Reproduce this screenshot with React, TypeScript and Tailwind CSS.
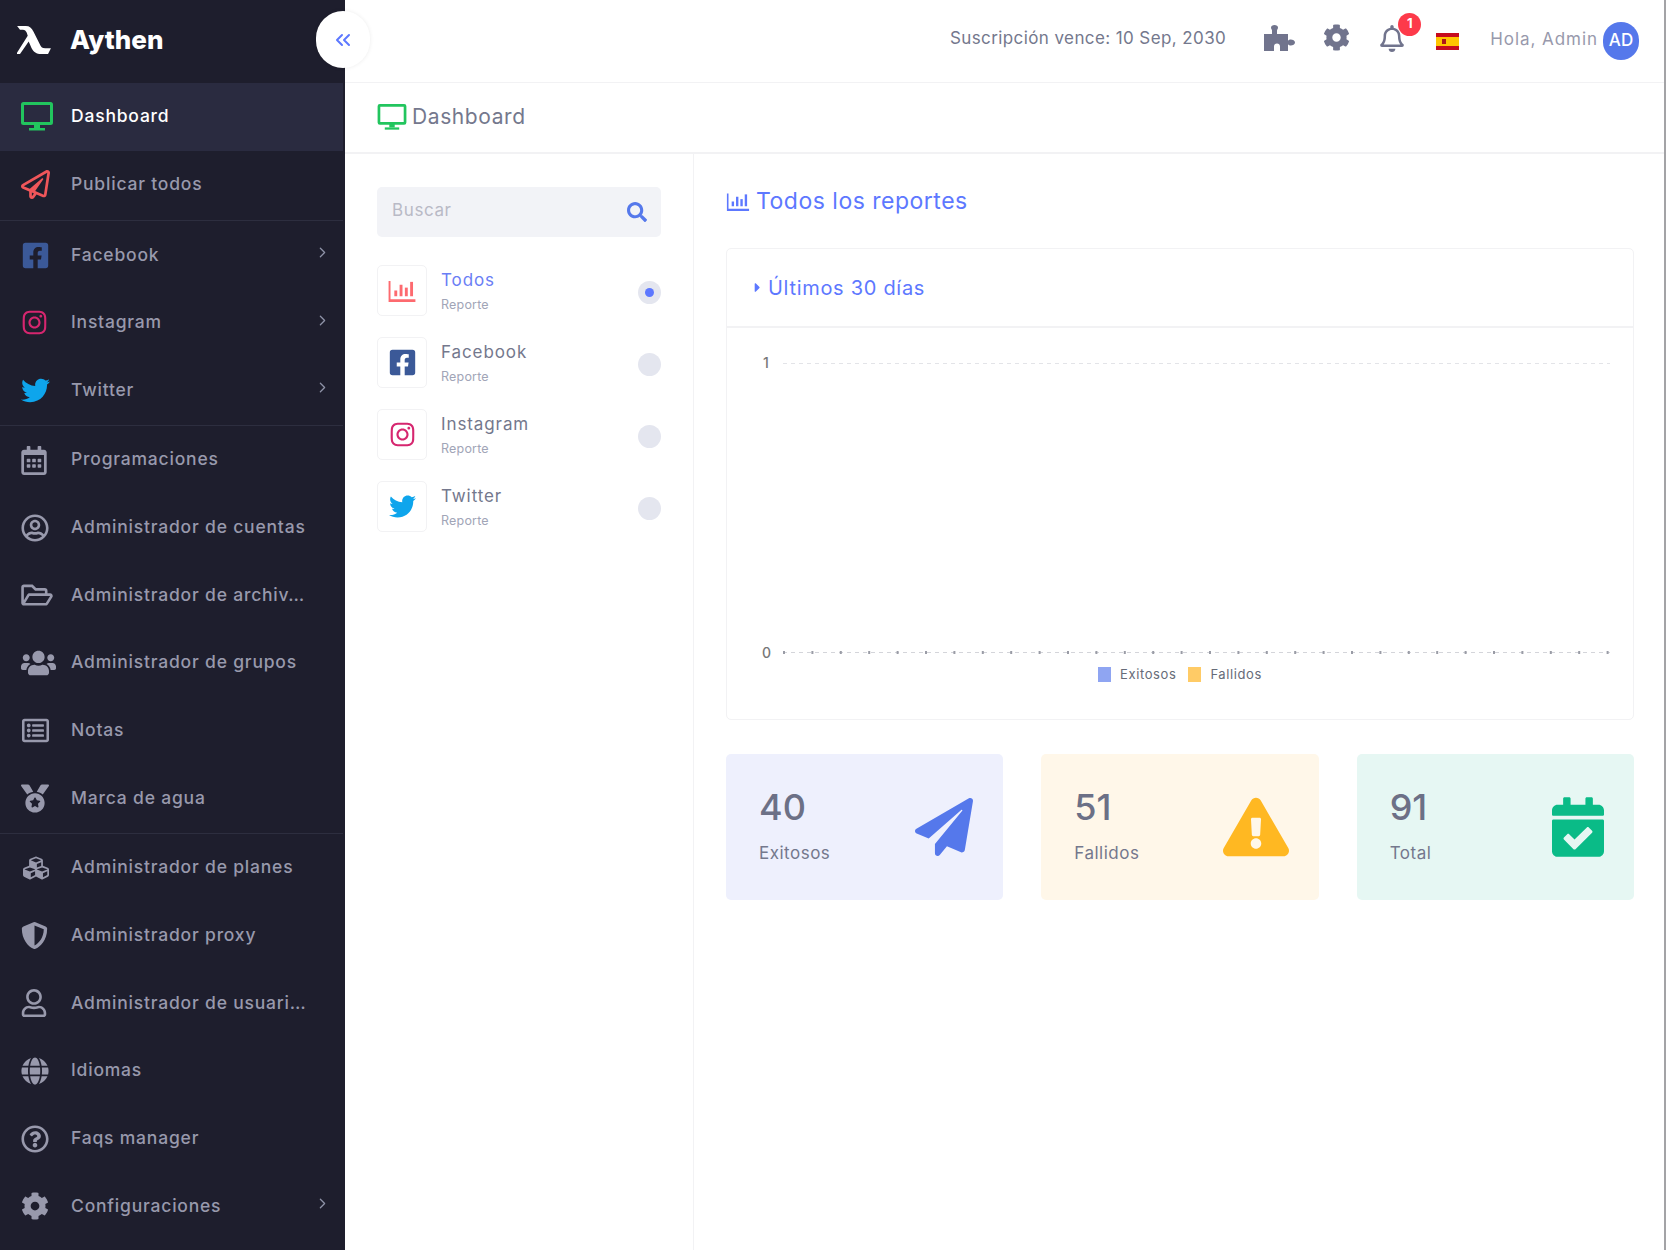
import React from "react";
import {
  FaRegPaperPlane, FaPaperPlane, FaFacebookSquare, FaInstagram, FaTwitter, FaRegCalendarAlt, FaRegUserCircle,
  FaRegFolderOpen, FaUsers, FaRegListAlt, FaMedal, FaCubes, FaShieldAlt, FaRegUser, FaGlobe, FaRegQuestionCircle,
  FaCog, FaRegBell, FaSearch, FaCaretRight, FaExclamationTriangle, FaCalendarCheck,
} from "react-icons/fa";
import { ChevronRight, ChevronsLeft } from "lucide-react";

const Monitor = ({ className }: { className?: string }) => (
  <svg viewBox="0 0 32 30" className={className} fill="none">
    <rect x="1.5" y="1.5" width="29" height="20" stroke="currentColor" strokeWidth="3" rx="1" />
    <rect x="13" y="22" width="6" height="4" fill="currentColor" />
    <rect x="8" y="26" width="16" height="2.5" fill="currentColor" />
  </svg>
);

const Bars = ({ className }: { className?: string }) => (
  <svg viewBox="0 0 28 24" className={className} fill="currentColor">
    <path d="M0 2h2v19h26v3H0z" />
    <rect x="6" y="12" width="3" height="6" />
    <rect x="11.5" y="6" width="3" height="12" />
    <rect x="17" y="9" width="3" height="9" />
    <rect x="22.5" y="3" width="3" height="15" />
  </svg>
);

const Puzzle = ({ className }: { className?: string }) => (
  <svg viewBox="0 0 31 26" className={className} fill="currentColor">
    <path d="M8 9V5.5C8 4.5 7 4 7 2.5 7 1 8.500 0 10.500 0S14 1 14 2.500C14 4 13 4.500 13 5.500V9h11v6.500c1-.5 1.500-1 2.800-1C28.800 14.500 31 15.500 31 17.500S28.800 20.500 26.800 20.500c-1.300 0-1.800-.5-2.800-1V26h-8v-4.500c0-1.800-1.200-3-3-3s-3 1.200-3 3V26H0V9z" />
  </svg>
);

type Item = { label: string; icon: React.ReactNode; chevron?: boolean };

const g1: Item[] = [
  { label: "Facebook", icon: <FaFacebookSquare className="text-[#3b5998] w-[29px] h-[29px]" />, chevron: true },
  { label: "Instagram", icon: <FaInstagram className="text-[#d6266f] w-[27px] h-[27px]" />, chevron: true },
  { label: "Twitter", icon: <FaTwitter className="text-[#0ea5ec] w-[29px] h-[29px]" />, chevron: true },
];
const ic = "text-[#9899ac]";
const g2: Item[] = [
  { label: "Programaciones", icon: <FaRegCalendarAlt className={`${ic} w-[26px] h-[29px]`} /> },
  { label: "Administrador de cuentas", icon: <FaRegUserCircle className={`${ic} w-[28px] h-[28px]`} /> },
  { label: "Administrador de archiv…", icon: <FaRegFolderOpen className={`${ic} w-[32px] h-[28px]`} /> },
  { label: "Administrador de grupos", icon: <FaUsers className={`${ic} w-[35px] h-[28px]`} /> },
  { label: "Notas", icon: <FaRegListAlt className={`${ic} w-[29px] h-[27px]`} /> },
  { label: "Marca de agua", icon: <FaMedal className={`${ic} w-[28px] h-[29px]`} /> },
];
const g3: Item[] = [
  { label: "Administrador de planes", icon: <FaCubes className={`${ic} w-[30px] h-[26px]`} /> },
  { label: "Administrador proxy", icon: <FaShieldAlt className={`${ic} w-[27px] h-[29px]`} /> },
  { label: "Administrador de usuari…", icon: <FaRegUser className={`${ic} w-[26px] h-[28px]`} /> },
  { label: "Idiomas", icon: <FaGlobe className={`${ic} w-[28px] h-[28px]`} /> },
  { label: "Faqs manager", icon: <FaRegQuestionCircle className={`${ic} w-[28px] h-[28px]`} /> },
  { label: "Configuraciones", icon: <FaCog className={`${ic} w-[28px] h-[28px]`} />, chevron: true },
];

function Row({ item, active }: { item: Item; active?: boolean }) {
  return (
    <div className={`flex items-center h-[67.67px] pl-[21px] pr-[12px] ${active ? "bg-[#2a2b40]" : ""}`}>
      <span className="w-[50px] flex items-center shrink-0">{item.icon}</span>
      <span className={`flex-1 text-[17.5px] tracking-[0.8px] whitespace-nowrap font-medium mb-[1px] ${active ? "text-white" : "text-[#9899ac]"}`}>{item.label}</span>
      {item.chevron && <ChevronRight strokeWidth={1.8} className="text-[#8f93a8] w-[17px] h-[17px] mb-[5px]" />}
    </div>
  );
}

function Sidebar() {
  return (
    <aside className="w-[345px] shrink-0 bg-[#1e1e2d] h-[1250px] pr-[2px] overflow-hidden">
      <div className="h-[83px] flex items-center pl-[17px]">
        <svg viewBox="0 0 36 30" className="w-[35px] h-[29px] mb-[4px]" fill="#fff">
          <path d="M0 1h9c4 0 6 2 8 6l7 14c1 2 2 3 5 3h6l-3 6h-7c-5 0-8-2-10-6l-3-7-9 13H-1L11 11l-1-3C9 6 8 5 6 5H3z" />
        </svg>
        <span className="ml-[18px] text-white text-[26px] font-extrabold font-['Inter'] mb-[5px]">Aythen</span>
      </div>
      <Row active item={{ label: "Dashboard", icon: <Monitor className="text-[#22c55e] w-[32px] h-[30px]" /> }} />
      <div className="pb-[2px]">
        <Row item={{ label: "Publicar todos", icon: <FaRegPaperPlane className="text-[#f0565a] w-[29px] h-[29px]" /> }} />
      </div>
      <div className="border-t border-[#2d2e3f] pb-[1px]">{g1.map((i) => <Row key={i.label} item={i} />)}</div>
      <div className="border-t border-[#2d2e3f] pb-[1px]">{g2.map((i) => <Row key={i.label} item={i} />)}</div>
      <div className="border-t border-[#2d2e3f]">{g3.map((i) => <Row key={i.label} item={i} />)}</div>
    </aside>
  );
}

function Topbar() {
  return (
    <header className="h-[83px] shrink-0 border-b border-[#f2f2f4] flex items-center justify-end pr-[25px] text-[#8a8da3]">
      <span className="text-[17px] tracking-[0.4px] text-[#74788d] mb-[5px] mr-[38px] whitespace-nowrap">Suscripción vence: 10 Sep, 2030</span>
      <Puzzle className="w-[31px] h-[26px] text-[#71748d] mr-[28px] mb-[7px]" />
      <FaCog className="w-[27px] h-[27px] text-[#71748d] mr-[30px] mb-[8px]" />
      <span className="relative mr-[32px] mb-[6px]">
        <FaRegBell className="w-[24px] h-[27px] text-[#71748d]" />
        <span className="absolute -top-[12px] -right-[17px] w-[23px] h-[23px] rounded-full bg-[#fd3a4a] text-white text-[13px] font-bold flex items-center justify-center">1</span>
      </span>
      <span className="w-[23px] h-[17px] flex flex-col mr-[31px]">
        <span className="h-[4px] bg-[#c60b1e]" />
        <span className="h-[9px] bg-[#ffc400] flex items-center pl-[6px]"><span className="w-[4px] h-[5px] bg-[#ad1519]" /></span>
        <span className="h-[4px] bg-[#c60b1e]" />
      </span>
      <span className="text-[17px] tracking-[0.95px] text-[#9899ac] whitespace-nowrap mr-[5px] mb-[2px]">Hola, Admin</span>
      <span className="w-[36px] h-[38px] rounded-full bg-[#5578eb] text-white text-[17px] font-medium flex items-center justify-center">AD</span>
    </header>
  );
}

const reports = [
  { name: "Todos", active: true, icon: <Bars className="w-[28px] h-[23px] text-[#fd6a6f]" /> },
  { name: "Facebook", icon: <FaFacebookSquare className="w-[29px] h-[29px] text-[#3b5998]" /> },
  { name: "Instagram", icon: <FaInstagram className="w-[27px] h-[27px] text-[#d6266f]" /> },
  { name: "Twitter", icon: <FaTwitter className="w-[27px] h-[27px] text-[#0ea5ec]" /> },
];

function LeftPanel() {
  return (
    <section className="w-[349px] shrink-0 border-r border-[#f2f2f4] pl-[32px] pr-[32px] pt-[33px]">
      <div className="h-[50px] rounded-[5px] bg-[#f2f3f7] flex items-center justify-between pl-[15px] pr-[14px]">
        <span className="text-[17px] tracking-[0.6px] text-[#b9bac6] mb-[2px]">Buscar</span>
        <FaSearch className="w-[20px] h-[20px] text-[#5578eb]" />
      </div>
      <div className="mt-[28px] flex flex-col gap-[21px]">
        {reports.map((r) => (
          <div key={r.name} className="flex items-center h-[51px]">
            <div className="w-[50px] h-[51px] border border-[#f2f2f4] rounded-[5px] flex items-center justify-center shrink-0">{r.icon}</div>
            <div className="ml-[14px] flex-1 mt-[1px]">
              <div className={`text-[17px] tracking-[0.9px] leading-[24px] ${r.active ? "text-[#6a7ef5]" : "text-[#74788d]"}`}>{r.name}</div>
              <div className="text-[12.5px] tracking-[0.2px] leading-[20px] text-[#a1a5b7] mt-[3px]">Reporte</div>
            </div>
            <span className="w-[23px] h-[23px] rounded-full bg-[#e4e6ef] flex items-center justify-center shrink-0 mt-[4px]">
              {r.active && <span className="w-[9px] h-[9px] rounded-full bg-[#5d78ff]" />}
            </span>
          </div>
        ))}
      </div>
    </section>
  );
}

function Chart() {
  const ticks = Array.from({ length: 30 }, (_, i) => i * 28.4);
  return (
    <div className="relative h-[392px]">
      <span className="absolute left-[36px] top-[24px] text-[14px] font-medium text-[#777]">1</span>
      <span className="absolute left-[35px] top-[314px] text-[14px] font-medium text-[#777]">0</span>
      <svg className="absolute left-[56px] top-[35px]" width="832" height="292">
        <line x1="0" y1="0.5" x2="827" y2="0.5" stroke="#e3e4e8" strokeDasharray="4 4" />
        <line x1="0" y1="289.5" x2="827" y2="289.5" stroke="#d4d5da" strokeDasharray="4 4" />
        {ticks.map((t, i) => (
          <rect key={i} x={t} y="288" width="2" height="3" fill="#9a9ca6" />
        ))}
      </svg>
      <div className="absolute left-0 right-0 top-[337px] flex items-center justify-center gap-[12px] text-[13px] tracking-[0.6px] text-[#666b78]">
        <span className="flex items-center gap-[9px]"><i className="w-[13px] h-[15px] bg-[#8fa5f2] block" />Exitosos</span>
        <span className="flex items-center gap-[9px]"><i className="w-[13px] h-[15px] bg-[#ffcb66] block" />Fallidos</span>
      </div>
    </div>
  );
}

function Stat({ n, label, bg, icon }: { n: string; label: string; bg: string; icon: React.ReactNode }) {
  return (
    <div className={`flex-1 h-[146px] rounded-[5px] flex items-center justify-between pl-[33px] pr-[30px] ${bg}`}>
      <div className="mb-[5px]">
        <div className="text-[36px] leading-[44px] font-medium text-[#6c7086]">{n}</div>
        <div className="text-[17px] tracking-[0.5px] leading-[24px] text-[#74788d] mt-[12px]">{label}</div>
      </div>
      {icon}
    </div>
  );
}

function RightPanel() {
  return (
    <section className="flex-1 pl-[32px] pr-[30px] pt-[32px]">
      <div className="flex items-center text-[#5d78ff] h-[30px]">
        <Bars className="w-[24px] h-[19px] mr-[6px]" />
        <span className="text-[23px] tracking-[0.5px]">Todos los reportes</span>
      </div>
      <div className="mt-[32px] border border-[#f2f2f4] rounded-[5px] h-[472px]">
        <div className="h-[79px] border-b-2 border-[#f2f2f4] flex items-center pl-[26px] text-[#5d78ff]">
          <FaCaretRight className="w-[9px] h-[15px] mr-[6px]" />
          <span className="text-[20px] tracking-[0.7px]">Últimos 30 días</span>
        </div>
        <Chart />
      </div>
      <div className="mt-[34px] flex gap-[38px]">
        <Stat n="40" label="Exitosos" bg="bg-[#eef0fd]" icon={<FaPaperPlane className="w-[58px] h-[60px] text-[#5578eb]" />} />
        <Stat n="51" label="Fallidos" bg="bg-[#fff7e9]" icon={<FaExclamationTriangle className="w-[66px] h-[60px] text-[#ffb822]" />} />
        <Stat n="91" label="Total" bg="bg-[#e6f7f3]" icon={<FaCalendarCheck className="w-[52px] h-[60px] text-[#0abb87]" />} />
      </div>
    </section>
  );
}

export default function App() {
  return (
    <div className="relative flex h-[1250px] overflow-hidden bg-white font-['Inter','Liberation_Sans',sans-serif]">
      <Sidebar />
      <main className="flex-1 flex flex-col min-w-0 border-r-2 border-[#a3a3a6] mr-[1px]">
        <Topbar />
        <div className="h-[71px] shrink-0 border-b-2 border-[#f2f2f4] flex items-center pl-[32px]">
          <Monitor className="text-[#22c55e] w-[30px] h-[27px] mr-[5px]" />
          <span className="text-[21px] tracking-[0.6px] text-[#74788d] mb-[1px]">Dashboard</span>
        </div>
        <div className="flex flex-1 min-h-0">
          <LeftPanel />
          <RightPanel />
        </div>
      </main>
      <button className="absolute left-[316px] top-[11px] w-[54px] h-[57px] rounded-full bg-white shadow-[0_0_4px_rgba(0,0,0,0.08)] flex items-center justify-center">
        <ChevronsLeft strokeWidth={2} className="w-[24px] h-[24px] text-[#5d78ff]" />
      </button>
    </div>
  );
}
